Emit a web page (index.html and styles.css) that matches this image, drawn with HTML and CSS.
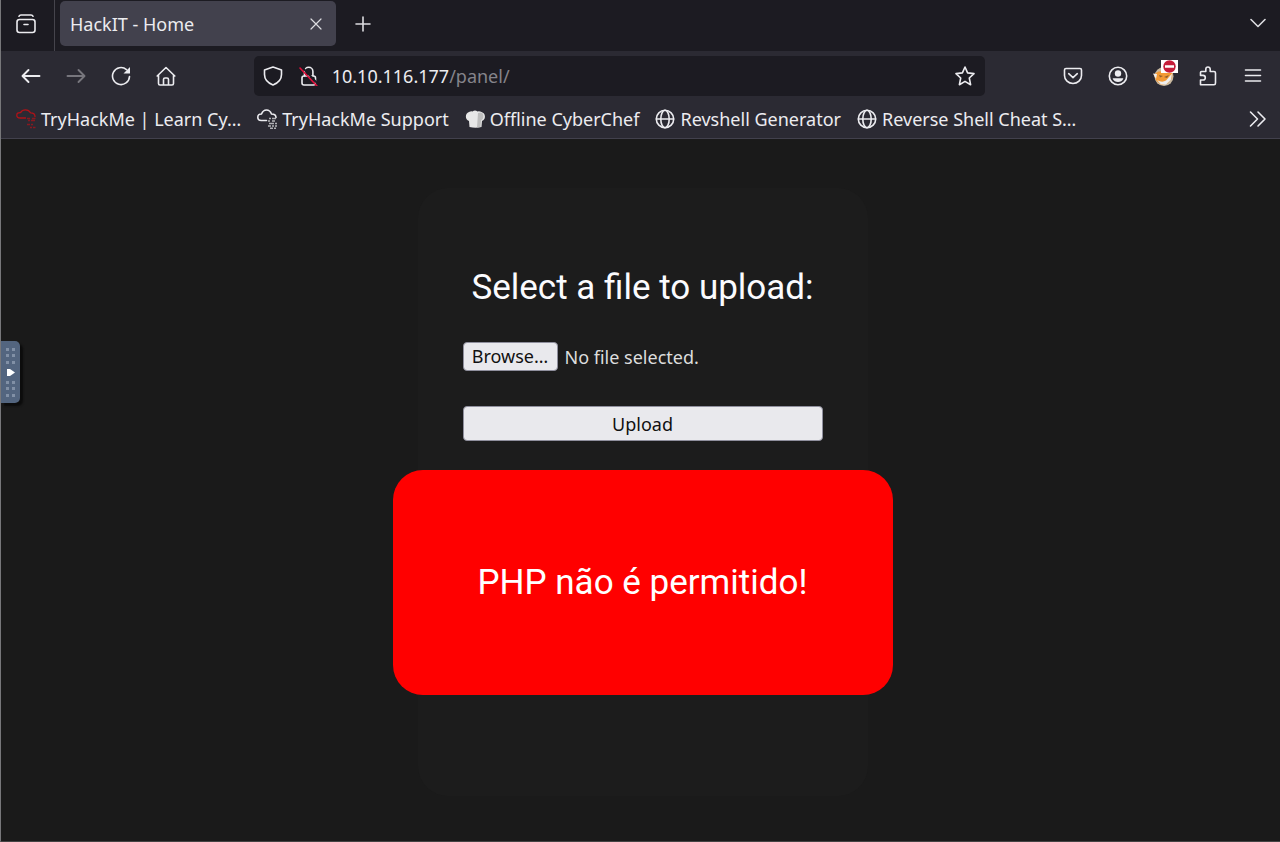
FILE: index.html
```html
<!DOCTYPE html>
<html lang="en">
<head>
<meta charset="utf-8">
<title>HackIT - Home</title>
<link rel="stylesheet" href="styles.css">
</head>
<body>
<div class="browser">
  <header class="chrome">
    <div class="tab-strip">
      <button class="icon-button recent" aria-label="Recent browsing">
        <svg class="icon" viewBox="0 0 20 20"><rect x="1" y="5.500" width="18" height="13" rx="2.500"/><path d="M3 2.200Q3.500 1 5 1h10q1.500 0 2 1.200M8 10.500h4"/></svg>
      </button>
      <div class="tab">
        <span class="tab-title">HackIT - Home</span>
        <button class="icon-button close" aria-label="Close tab">
          <svg class="icon small" viewBox="0 0 12 12"><path d="M1 1l10 10M11 1L1 11"/></svg>
        </button>
      </div>
      <button class="icon-button new-tab" aria-label="New tab">
        <svg class="icon medium" viewBox="0 0 16 16"><path d="M8 1v14M1 8h14"/></svg>
      </button>
      <button class="icon-button all-tabs" aria-label="List all tabs">
        <svg class="icon medium" viewBox="0 0 16 16"><path d="M1 4.500l7 7 7-7"/></svg>
      </button>
    </div>
    <nav class="toolbar" aria-label="Navigation">
      <button class="icon-button" aria-label="Back">
        <svg class="icon bold" viewBox="0 0 20 20"><path d="M18.500 10H2M7.500 4L1.500 10l6 6"/></svg>
      </button>
      <button class="icon-button dim" aria-label="Forward">
        <svg class="icon bold" viewBox="0 0 20 20"><path d="M1.500 10H18M12.500 4l6 6-6 6"/></svg>
      </button>
      <button class="icon-button" aria-label="Reload">
        <svg class="icon" viewBox="0 0 20 20"><path d="M15.500 3.600A8.500 8.500 0 1 0 18.500 10.500"/><path class="solid" d="M19 1v6.500h-6.500z"/></svg>
      </button>
      <button class="icon-button" aria-label="Home">
        <svg class="icon" viewBox="0 0 20 20"><path d="M1.200 10L10 1.500l8.800 8.500M2.500 9V17.500q0 1.500 1.500 1.500h12q1.500 0 1.500-1.500V9M7.500 18.500v-5q0-1.500 1.500-1.500h2q1.500 0 1.500 1.500v5"/></svg>
      </button>
      <span class="spacer"></span>
      <div class="url-bar">
        <svg class="icon" viewBox="0 0 20 20"><path d="M10 1l8.500 3v4.500c0 5-3.500 8.500-8.500 10.500-5-2-8.500-5.500-8.500-10.500V4z"/></svg>
        <svg class="icon lock" viewBox="0 0 20 20"><rect x="3" y="10" width="13.500" height="9" rx="2"/><path d="M5.500 10V5.500a4.200 4.200 0 0 1 8.400 0V10"/><path class="shade" d="M2 0l17 18"/><path class="slash" d="M1 2l17 18"/></svg>
        <a class="address" href="#">10.10.116.177<span class="path">/panel/</span></a>
        <button class="icon-button star" aria-label="Bookmark this page">
          <svg class="icon" viewBox="0 0 20 20"><path d="M10 1l2.600 5.900 6.400.700-4.700 4.400 1.300 6.700L10 15.400l-5.600 3.300 1.300-6.700L1 7.600l6.400-.700z"/></svg>
        </button>
      </div>
      <span class="spacer"></span>
      <button class="icon-button" aria-label="Save to Pocket">
        <svg class="icon" viewBox="0 0 20 20"><path d="M3 2.500h14q1.500 0 1.500 1.500v5.500a8.500 8 0 0 1-17 0V4q0-1.500 1.500-1.500z"/><path d="M5.700 7.700l4.300 4 4.300-4"/></svg>
      </button>
      <button class="icon-button" aria-label="Account">
        <svg class="icon" viewBox="0 0 20 20"><circle cx="10" cy="10" r="8.700"/><circle class="solid" cx="10" cy="7.500" r="3.200"/><path class="solid" d="M4.800 12.200h10.400v.800q-1.500 3-5.200 3T4.800 13z"/></svg>
      </button>
      <button class="icon-button proxy" aria-label="FoxyProxy: disabled">
        <svg class="picture" viewBox="0 0 26 28"><circle cx="11" cy="17.500" r="9.500" fill="#c9b9a0"/><path d="M.500 15.500l5-3 11-.500 3 2.500-1 5-4 5-6 1.500-5-4z" fill="#f39a35"/><path d="M0 14.500l4 .500-1 5zM4 21q5 3 9 .500l6-7-1 6-5 5H8z" fill="#eee"/><path d="M6 16l4 1-3 1.500zM11 18l5-2-2 3z" fill="#94602d"/><rect x="8" y="1" width="17" height="13" fill="#fff"/><circle cx="16.500" cy="7.500" r="6.200" fill="#c51d3a"/><path d="M12 7.500h9" stroke="#fff" stroke-width="2.500"/></svg>
      </button>
      <button class="icon-button" aria-label="Extensions">
        <svg class="icon" viewBox="0 0 20 20"><path d="M2.500 18.700V14H5a2.300 2.300 0 0 0 0-4.600H2.500V6.500q0-1 1-1h4.300V3.200a2.200 2.200 0 0 1 4.400 0v2.300H16q1.500 0 1.500 1.500v10q0 1.700-1.500 1.700z"/></svg>
      </button>
      <button class="icon-button" aria-label="Application menu">
        <svg class="icon" viewBox="0 0 20 20"><path d="M2.500 4h15M2.500 9.500h15M2.500 15h15"/></svg>
      </button>
    </nav>
    <nav class="bookmarks" aria-label="Bookmarks">
      <a class="bookmark" href="#"><svg class="icon red" viewBox="0 0 20 20"><path d="M9.500 9H4.200Q.800 9 .800 6.200T4.500 3.600Q6 .800 9.500 .800t5 3q4.500 0 4.500 3.700"/><path class="bits" d="M11 9.500h3m2 0h3.500M12 11.500h2m1 0h4M11 15.500h3m1 0h2M14 18.500h2m1 0h2.500"/></svg>TryHackMe | Learn Cy…</a>
      <a class="bookmark" href="#"><svg class="icon" viewBox="0 0 20 20"><path d="M9.500 11.500H4.200Q.800 11.500 .800 8.200T4.500 5Q6 1 9.500 1t5 4q4.500 0 4.500 3.500"/><path class="bits" d="M12 9.500h2m1 0h4M11 12h2m2 0h3M12 14.500h5m1 0h2M11 17h3m1 0h2m1 0h2M13 19.200h3m1 0h2"/></svg>TryHackMe Support</a>
      <a class="bookmark" href="#"><svg class="icon" viewBox="0 0 20 20"><path fill="#e7e7e7" stroke="none" d="M4.500 18L4 12A4.800 4.800 0 0 1 4 3q2-1 3.500-.500 2.500-2 5 0 2-.500 4 .500a4.800 4.800 0 0 1 .500 9l-.500 6q-6 1.500-12 0z"/><path fill="#bdbdbd" stroke="none" d="M13 4q4-1.500 5 1 1.500 4.500-2 6.500l-.500 6.500-3.500.500z"/></svg>Offline CyberChef</a>
      <a class="bookmark" href="#"><svg class="icon" viewBox="0 0 20 20"><circle cx="10" cy="10" r="8.700"/><ellipse cx="10" cy="10" rx="4.200" ry="8.700"/><path d="M1.500 10h17"/></svg>Revshell Generator</a>
      <a class="bookmark" href="#"><svg class="icon" viewBox="0 0 20 20"><circle cx="10" cy="10" r="8.700"/><ellipse cx="10" cy="10" rx="4.200" ry="8.700"/><path d="M1.500 10h17"/></svg>Reverse Shell Cheat S…</a>
      <button class="icon-button more" aria-label="More bookmarks">
        <svg class="icon" viewBox="0 0 20 20"><path d="M2.500 3l7 7-7 7M10 3l7 7-7 7"/></svg>
      </button>
    </nav>
  </header>
  <main class="page">
    <section class="card">
      <form class="upload-form">
        <h1 class="title">Select a file to upload:</h1>
        <div class="file-row">
          <input class="file-input" type="file" id="file">
          <label class="browse" for="file">Browse…</label>
          <span class="file-name">No file selected.</span>
        </div>
        <button class="submit" type="button">Upload</button>
      </form>
      <div class="alert" role="alert">PHP não é permitido!</div>
    </section>
  </main>
  <button class="drawer-handle" aria-label="Open control bar">
    <svg class="handle-art" viewBox="0 0 20 62"><g fill="#8190a6"><path d="M5 7h3v3H5zM11 7h3v3h-3zM5 13h3v3H5zM11 13h3v3h-3zM5 20h3v3H5zM11 20h3v3h-3zM5 40h3v3H5zM11 40h3v3h-3zM5 46h3v3H5zM11 46h3v3h-3zM5 53h3v3H5zM11 53h3v3h-3z"/></g><path fill="#fff" d="M6 28h3l5 3.500L9 35H6z"/></svg>
  </button>
</div>
</body>
</html>
```
FILE: styles.css
```css
* { box-sizing: border-box; }

body {
  margin: 0;
  background: #1a1a1a;
  color: #fbfbfe;
  font-family: "Noto Sans", "Open Sans", sans-serif;
  font-size: 18px;
}

button {
  padding: 0;
  border: 0;
  background: none;
  color: inherit;
  font: inherit;
}

a { color: inherit; text-decoration: none; }

.browser {
  position: relative;
  display: flex;
  flex-direction: column;
  min-height: 100vh;
  border-left: 1px solid #77777a;
  border-bottom: 1px solid #444;
}

.chrome { background: #2b2a33; border-bottom: 1px solid #42414d; color: #ececf0; }

.icon {
  display: block;
  flex: none;
  width: 20px;
  height: 20px;
  fill: none;
  stroke: currentColor;
  stroke-width: 1.600;
  stroke-linecap: round;
  stroke-linejoin: round;
}
.icon.small { width: 12px; height: 12px; stroke-width: 1.200; }
.icon.medium { width: 16px; height: 16px; }
.icon.bold { stroke-width: 1.900; }
.icon .solid { fill: currentColor; stroke: none; }
.icon .shade { stroke: #1c1b22; stroke-width: 2; }
.icon .slash { stroke: #e0103c; }
.icon .bits { stroke-width: 1.500; stroke-linecap: butt; opacity: .7; }
.icon.red { color: #b01218; stroke-width: 1.300; }

.icon-button {
  display: flex;
  flex: none;
  align-items: center;
  justify-content: center;
  width: 45px;
  height: 40px;
}
.dim { color: #77767d; }

.tab-strip {
  display: flex;
  align-items: center;
  height: 51px;
  background: #1c1b22;
}
.tab-strip > .icon-button { padding-bottom: 3px; }
.tab-strip > .recent {
  width: 54px;
  height: 51px;
  padding-right: 3px;
  border-right: 1px solid #45444c;
}
.tab {
  display: flex;
  align-items: center;
  flex: 0 1 276px;
  height: 45px;
  margin: 0 4px 4px 5px;
  padding: 0 10px;
  border-radius: 5px;
  background: #42414d;
}
.tab-title { flex: 1; }
.icon-button.close { width: 20px; }
.tab-strip > .all-tabs { margin-left: auto; padding-bottom: 5px; }
.icon-button.close, .new-tab, .all-tabs { color: #dcdce0; }

.toolbar {
  display: flex;
  align-items: center;
  padding: 5px 4px 5px 7px;
}
.spacer { flex: 1; }
.url-bar {
  display: flex;
  flex: 11;
  align-items: center;
  height: 40px;
  padding-left: 9px;
  border-radius: 5px;
  background: #1c1b22;
}
.lock { margin: 0 13px 0 16px; }
.address { flex: 1; }
.path { color: #85848b; }
.icon-button.star { width: 40px; }
.icon-button.proxy { padding: 0 0 7px 5px; }
.picture { flex: none; width: 26px; height: 28px; }

.bookmarks {
  display: flex;
  align-items: center;
  gap: 16px;
  height: 37px;
  padding: 0 0 1px 15px;
}
.bookmark {
  display: flex;
  align-items: center;
  gap: 5px;
  white-space: nowrap;
}
.more { margin-left: auto; }

.page { padding: 49px 0 45px 4px; }
.card {
  display: flex;
  flex-direction: column;
  align-items: center;
  width: 450px;
  margin: 0 auto;
  padding: 72px 45px 101px;
  border-radius: 30px;
  background: #1c1c1c;
}
.upload-form {
  display: flex;
  flex-direction: column;
  align-self: stretch;
}
.title {
  margin: 0 0 26px;
  font-size: 35px;
  font-weight: 400;
  line-height: 56px;
  text-align: center;
  white-space: nowrap;
}
.title, .alert { font-family: Roboto, sans-serif; }
.file-row {
  position: relative;
  display: flex;
  align-items: center;
  gap: 7px;
  margin-bottom: 35px;
  color: #ddd;
}
.file-input { position: absolute; width: 1px; height: 1px; opacity: 0; }
.browse, .submit {
  border: 1px solid #8f8f9d;
  border-radius: 4px;
  background: #e9e9ed;
  color: #111;
  text-align: center;
}
.browse { min-width: 95px; padding: 0 7px; line-height: 27px; }
.submit { height: 35px; }
.alert {
  width: 500px;
  margin-top: 29px;
  padding: 85px 20px 84px;
  border-radius: 30px;
  background: #f00;
  color: #fff;
  font-size: 35px;
  line-height: 56px;
  text-align: center;
}

.drawer-handle {
  position: absolute;
  top: 341px;
  left: 0;
  width: 19px;
  height: 62px;
  border-radius: 0 5px 5px 0;
  background: #53657f;
  box-shadow: 3px 3px 2px #0c0c0c;
}
.handle-art { display: block; width: 20px; height: 62px; }
```
